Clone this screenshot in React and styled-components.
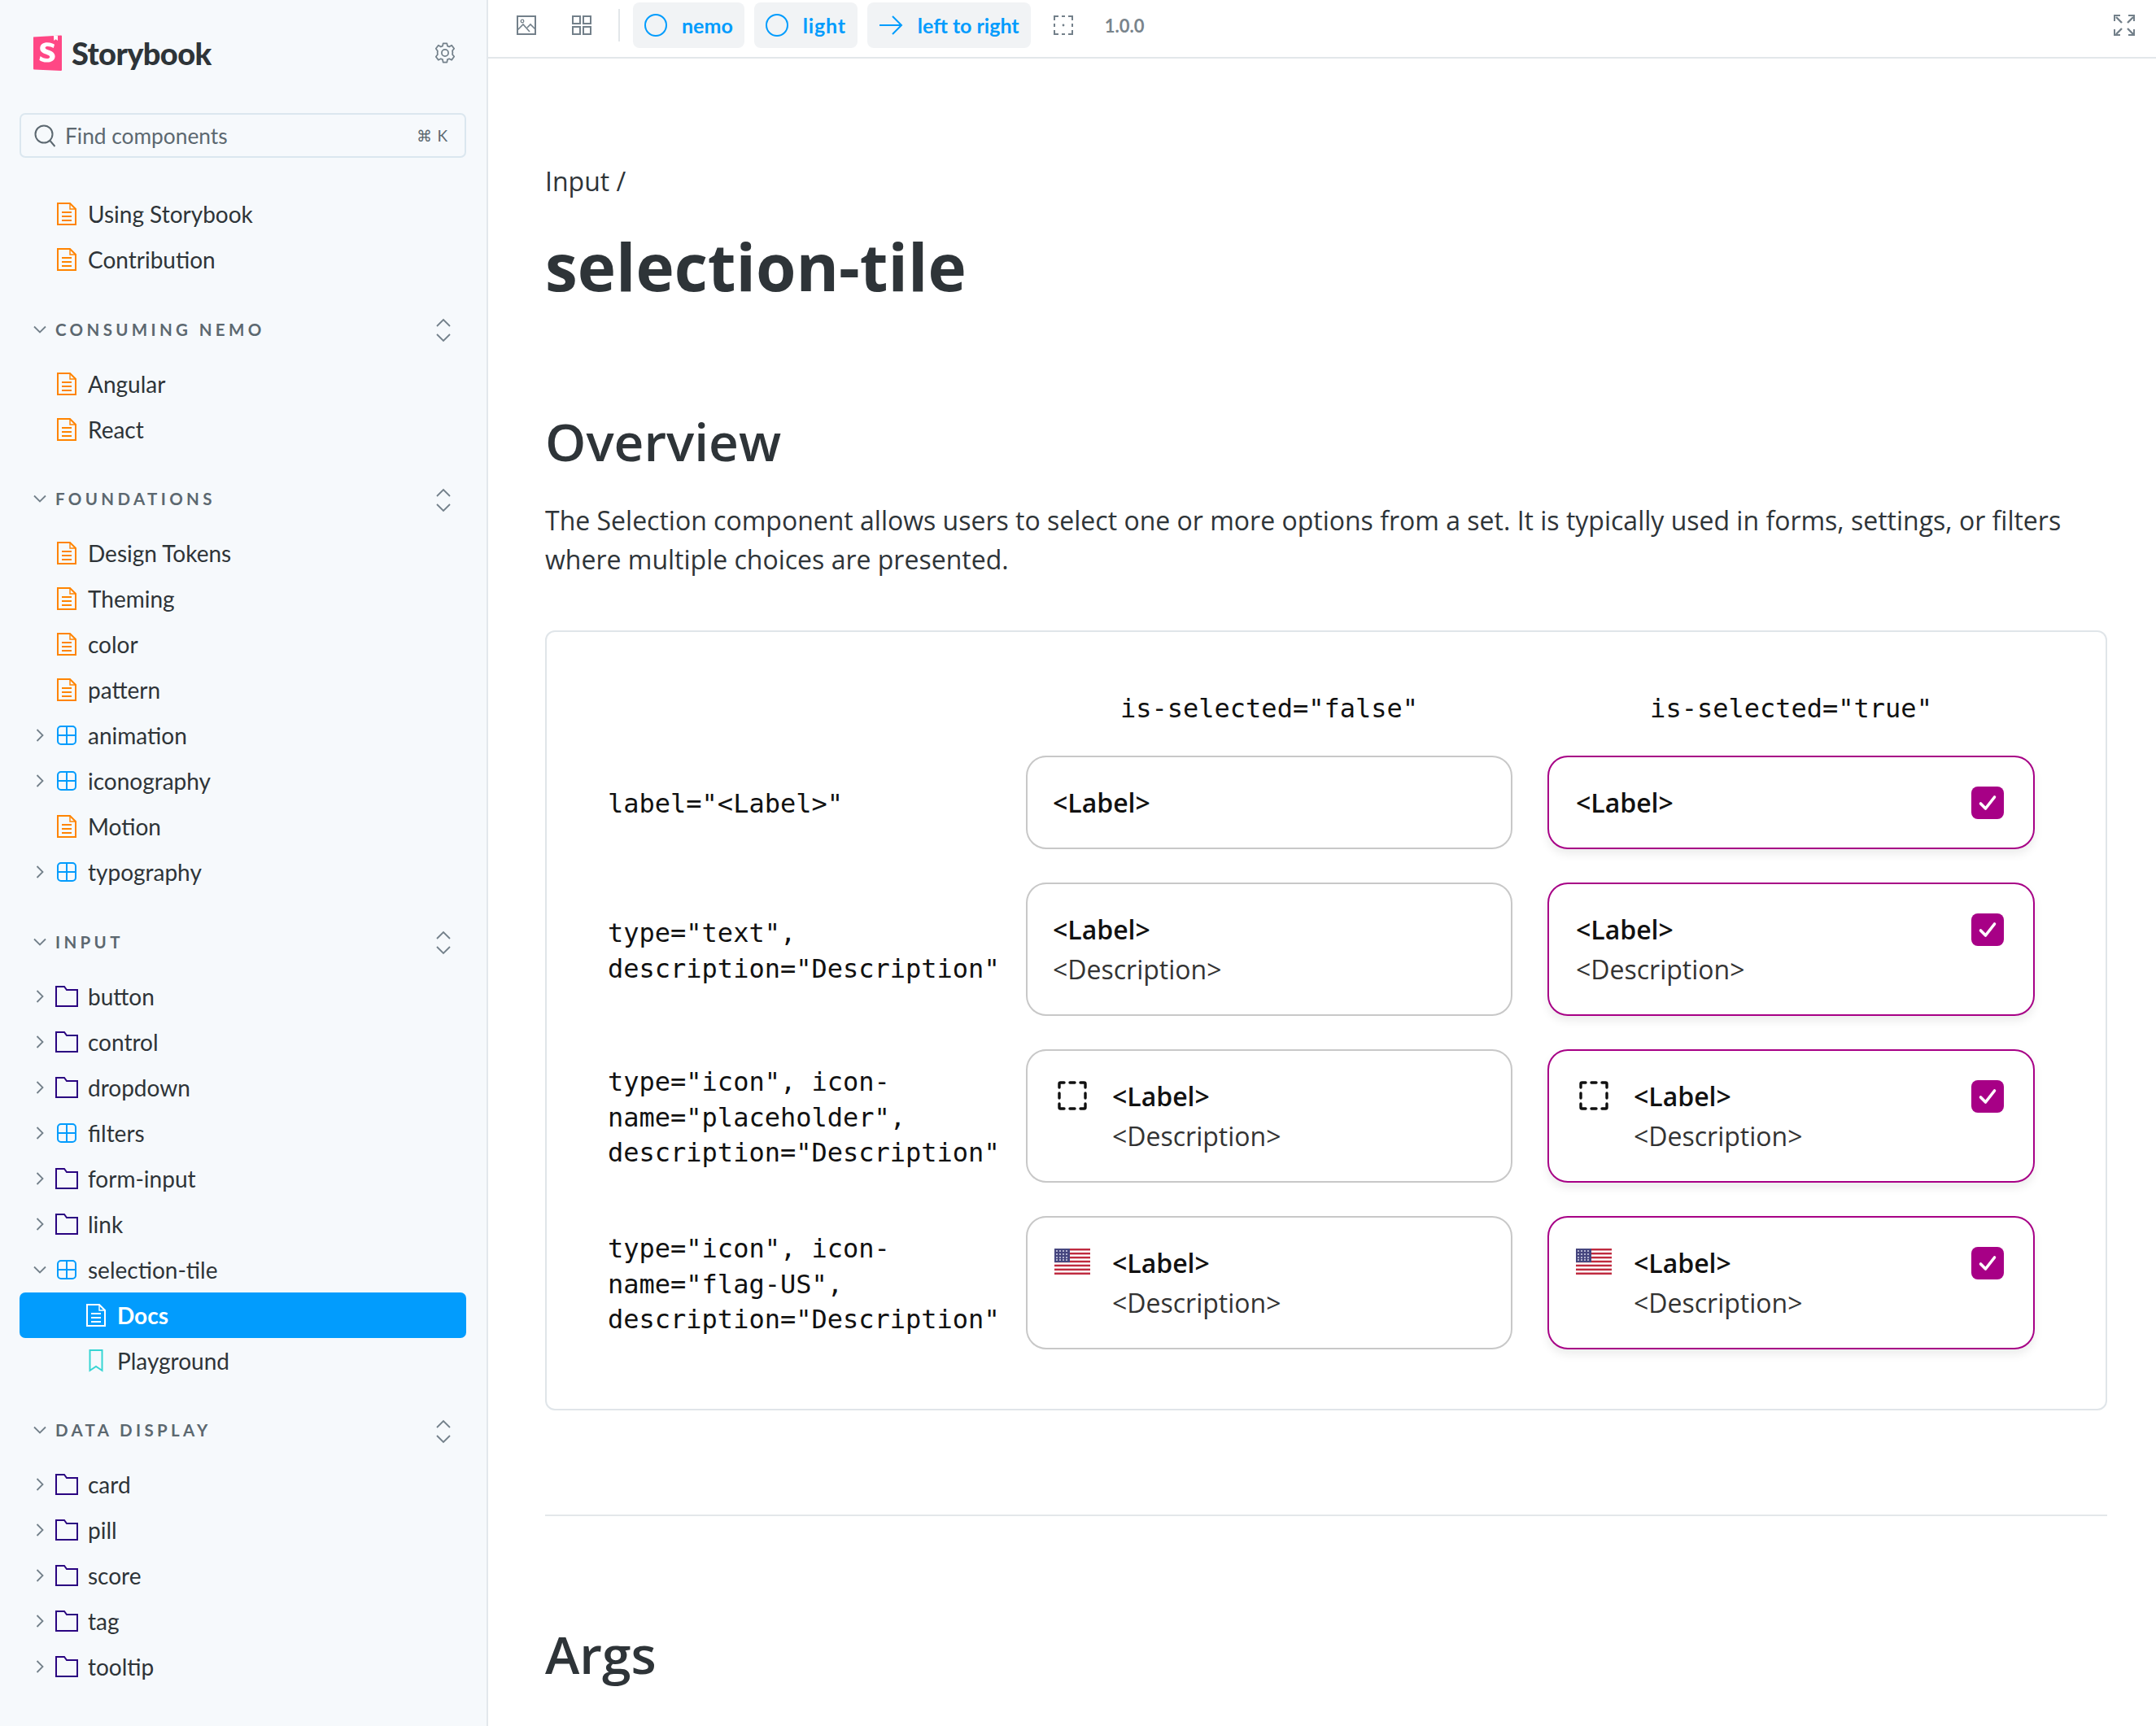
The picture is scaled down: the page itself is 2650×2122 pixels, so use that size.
import React from "react";
import styled, { createGlobalStyle } from "styled-components";

const GlobalStyle = createGlobalStyle`
  html, body { margin: 0; padding: 0; background: #fff; }
  * { box-sizing: border-box; }
`;

const Page = styled.div`
  display: flex;
  width: 2650px;
  height: 2122px;
  overflow: hidden;
  font-family: "Open Sans", "Noto Sans", sans-serif;
  color: #2e3438;
`;

const Sidebar = styled.aside`
  flex: 0 0 600px;
  height: 100%;
  padding: 0 25px 0 24px;
  background: #f6f9fc;
  border-right: 2px solid #e3e8ec;
  font-family: Lato, "Noto Sans", sans-serif;
  overflow: hidden;
`;

const Brand = styled.div`
  display: flex;
  align-items: center;
  height: 130px;
  padding: 0 12px 0 16px;
`;

const BrandName = styled.span`
  margin-left: 12px;
  font-size: 38px;
  font-weight: 900;
  letter-spacing: -0.6px;
  color: #2e3438;
`;

const GearSlot = styled.span`
  display: flex;
  margin-left: auto;
`;

const Search = styled.div`
  display: flex;
  align-items: center;
  height: 55px;
  margin-top: 9px;
  padding: 0 20px 0 16px;
  border: 2px solid #dbe7ef;
  border-radius: 7px;
  color: #5c6870;
  font-size: 26.3px;
`;

const SearchText = styled.span`
  margin-left: 12px;
`;

const Shortcut = styled.span`
  margin-left: auto;
  font-size: 19px;
  letter-spacing: 1px;
`;

const TopGroup = styled.div`
  margin-top: 41px;
`;

const Section = styled.section`
  margin-top: 26.5px;
`;

const SectionHead = styled.div`
  display: flex;
  align-items: center;
  height: 62px;
  padding: 0 18px 0 16px;
  margin-bottom: 8px;
`;

const SectionTitle = styled.span`
  margin-left: 10px;
  font-size: 20.5px;
  font-weight: 700;
  letter-spacing: 4.35px;
  color: #5c6870;
`;

const ExpandSlot = styled.span`
  display: flex;
  margin-left: auto;
  padding-top: 3px;
`;

const Row = styled.div`
  position: relative;
  display: flex;
  align-items: center;
  height: 56px;
  padding-left: ${(p) => (p.$nested ? "82px" : "46px")};
  border-radius: 7px;
  font-size: 28px;
  font-weight: ${(p) => (p.$active ? 700 : 400)};
  color: ${(p) => (p.$active ? "#fff" : "#2e3438")};
  background: ${(p) => (p.$active ? "#029cfd" : "transparent")};
`;

const RowChevron = styled.span`
  position: absolute;
  left: 16px;
  top: 50%;
  display: flex;
  transform: translateY(-50%);
`;

const RowIcon = styled.span`
  display: flex;
  justify-content: center;
  flex: 0 0 28px;
  margin-left: -2px;
  margin-right: 12px;
`;

const Main = styled.main`
  flex: 1;
  min-width: 0;
  height: 100%;
  overflow: hidden;
`;

const Toolbar = styled.div`
  display: flex;
  align-items: center;
  height: 72px;
  padding: 0 26px 8px 35px;
  border-bottom: 2px solid #e3e7ea;
`;

const ToolIcon = styled.span`
  display: flex;
  margin-left: ${(p) => p.$before || 0}px;
  margin-right: ${(p) => p.$gap || 0}px;
`;

const Divider = styled.span`
  width: 2px;
  height: 40px;
  margin: 0 16px 0 33px;
  background: #e3e7ea;
`;

const Pill = styled.span`
  display: flex;
  align-items: center;
  height: 56px;
  margin-right: 12px;
  padding: 0 14px 0 14px;
  border-radius: 8px;
  background: #f1f3f5;
  font-family: Lato, "Noto Sans", sans-serif;
  font-size: 25px;
  font-weight: 700;
  color: #029cfd;
`;

const PillLabel = styled.span`
  margin-left: 18px;
  letter-spacing: ${(p) => p.$track || 0}px;
`;

const Version = styled.span`
  margin-left: 39px;
  font-family: Lato, "Noto Sans", sans-serif;
  font-size: 22px;
  font-weight: 700;
  color: #79848c;
`;

const FullscreenSlot = styled.span`
  display: flex;
  margin-left: auto;
`;

const Content = styled.div`
  width: 1920px;
  margin-left: 70px;
`;

const Crumb = styled.div`
  margin-top: 128px;
  font-size: 32px;
  line-height: 46px;
`;

const Title = styled.h1`
  margin: 29px 0 0;
  font-size: 80px;
  line-height: 104px;
  font-weight: 700;
  color: #2e3438;
`;

const Heading = styled.h2`
  margin: ${(p) => p.$top}px 0 0;
  font-size: 64px;
  line-height: 88px;
  font-weight: 550;
  color: #2e3438;
`;

const Lead = styled.p`
  margin: 29px 0 0;
  font-size: 32px;
  line-height: 48px;
  color: #2e3438;
`;

const Preview = styled.div`
  display: grid;
  grid-template-columns: 471px 598px 599px;
  column-gap: 43px;
  row-gap: 41px;
  align-items: center;
  align-content: start;
  height: 959px;
  margin-top: 63px;
  padding: 75px 75px;
  border: 2px solid #e0e5e9;
  border-radius: 12px;
`;

const Mono = styled.div`
  padding-top: 5px;
  font-family: "DejaVu Sans Mono", "Liberation Mono", monospace;
  font-size: 32px;
  line-height: 43.5px;
  white-space: nowrap;
  color: #111;
`;

const ColHead = styled(Mono)`
  padding-top: 2px;
  line-height: 34px;
  text-align: center;
`;

const Tile = styled.div`
  position: relative;
  display: flex;
  align-items: flex-start;
  gap: 27px;
  padding: 31px 33px 31px ${(p) => (p.$on || p.$hasIcon ? 33 : 31)}px;
  background: #fff;
  border-radius: 25px;
  border: 2px solid ${(p) => (p.$on ? "#a70086" : "#c8c8c8")};
  box-shadow: ${(p) => (p.$on ? "0 6px 12px rgba(0,0,0,0.08)" : "none")};
`;

const TileIcon = styled.span`
  display: flex;
  justify-content: center;
  flex: 0 0 44px;
  margin-top: ${(p) => p.$top}px;
`;

const TileLabel = styled.div`
  font-size: 32px;
  line-height: 49px;
  font-weight: 600;
  color: #111;
`;

const TileDescription = styled.div`
  font-size: 32px;
  line-height: 49px;
  color: #333;
`;

const CheckBox = styled.span`
  position: absolute;
  top: 36px;
  right: 36px;
  display: flex;
  align-items: center;
  justify-content: center;
  width: 40px;
  height: 40px;
  border-radius: 8px;
  background: #a70086;
`;

const Rule = styled.hr`
  height: 2px;
  margin: 128px 0 0;
  border: 0;
  background: #e3e7ea;
`;

const DocIcon = ({ color = "#ff8400" }) => (
  <svg width="24" height="28" viewBox="0 0 24 28" fill="none" stroke={color} strokeWidth="2">
    <path d="M1 1h15l7 7v19H1z" />
    <path d="M16 1v7h7" strokeWidth="1.4" />
    <path d="M6 12h12M6 17h12M6 22h12" />
  </svg>
);

const ComponentIcon = () => (
  <svg width="24" height="24" viewBox="0 0 24 24" fill="none" stroke="#029cfd" strokeWidth="2">
    <rect x="1" y="1" width="22" height="22" rx="4" />
    <path d="M12 1v22M1 12h22" />
  </svg>
);

const FolderIcon = () => (
  <svg width="28" height="26" viewBox="0 0 28 26" fill="none" stroke="#2a0481" strokeWidth="2">
    <path d="M1 1h10l3 4h13v20H1z" />
  </svg>
);

const BookmarkIcon = () => (
  <svg width="18" height="28" viewBox="0 0 18 28" fill="none" stroke="#37d5d3" strokeWidth="2">
    <path d="M1.500 1h15v25L9 21l-7.500 5z" />
  </svg>
);

const Chevron = ({ open, color = "#73808a" }) => (
  <svg width="18" height="18" viewBox="0 0 18 18" fill="none" stroke={color} strokeWidth="1.8">
    <path d={open ? "M2 5.500l7 7 7-7" : "M5.500 2l7 7-7 7"} />
  </svg>
);

const ExpandIcon = () => (
  <svg width="20" height="30" viewBox="0 0 20 30" fill="none" stroke="#73808a" strokeWidth="1.8">
    <path d="M2 10l8-8 8 8M2 20l8 8 8-8" />
  </svg>
);

const Logo = () => (
  <svg width="36" height="44" viewBox="0 0 36 44">
    <path d="M1 2.500L35 .5a1 1 0 0 1 1 1V43a1 1 0 0 1-1 1L2 42.500a1 1 0 0 1-1-1z" fill="#ff4785" />
    <path d="M26 1l.3 6 2.300-1.700L31 7V1z" fill="#fff" />
    <path
      transform="translate(-3.6 -4.5) scale(1.2 1.05)"
      d="M18 13c4 0 6.500 1.500 7.500 2.500l-1 4c-1.800-1.200-3.800-2-5.800-2-1.600 0-2.700.6-2.700 1.800 0 3.200 10 2.500 10 10 0 4.700-3.800 7-8.200 7-3.600 0-6.300-1.300-7.800-2.800l1-4.500c1.800 1.700 4.300 2.900 6.600 2.900 1.900 0 3.100-.8 3.100-2.200 0-3.300-10-2.600-10-9.800C10.700 15.300 14 13 18 13z"
      fill="#fff"
    />
  </svg>
);

const GearIcon = () => (
  <svg width="28" height="28" viewBox="0 0 24 24" fill="none" stroke="#73808a" strokeWidth="1.5">
    <path
      d="M10 2h4l.6 2.800 1.800.8L19 4l2.600 3.500-1.800 2.200.2 2-.2 2 1.800 2.200L19 19.500l-2.600-1.300-1.800.8L14 22h-4l-.6-3-1.800-.8L5 19.500 2.400 16l1.800-2.300-.2-1.700.2-2L2.400 7.500 5 4l2.600 1.600 1.800-.8z"
      strokeLinejoin="round"
    />
    <circle cx="12" cy="12" r="3.500" />
  </svg>
);

const SearchIcon = () => (
  <svg width="26" height="28" viewBox="0 0 26 28" fill="none" stroke="#5c6870" strokeWidth="2">
    <circle cx="12" cy="12" r="10.500" />
    <path d="M19.500 20l6 7" />
  </svg>
);

const ImageIcon = () => (
  <svg width="24" height="24" viewBox="0 0 24 24" fill="none" stroke="#73808a" strokeWidth="2">
    <rect x="1" y="1" width="22" height="22" />
    <circle cx="7" cy="7" r="1.800" strokeWidth="1.300" />
    <path d="M1 18l7-7 8 9M13 15l4-4 6 6" strokeWidth="1.600" />
  </svg>
);

const GridIcon = () => (
  <svg width="24" height="24" viewBox="0 0 24 24" fill="none" stroke="#73808a" strokeWidth="2">
    <rect x="1" y="1" width="9" height="9" />
    <rect x="14" y="1" width="9" height="9" />
    <rect x="1" y="14" width="9" height="9" />
    <rect x="14" y="14" width="9" height="9" />
  </svg>
);

const RingIcon = () => (
  <svg width="28" height="28" viewBox="0 0 28 28" fill="none" stroke="#029cfd" strokeWidth="2">
    <circle cx="14" cy="14" r="13" />
  </svg>
);

const ArrowIcon = () => (
  <svg width="30" height="26" viewBox="0 0 30 26" fill="none" stroke="#029cfd" strokeWidth="2">
    <path d="M1 13h27M17 2l11 11-11 11" />
  </svg>
);

const MeasureIcon = () => (
  <svg width="24" height="24" viewBox="0 0 24 24" fill="none" stroke="#73808a" strokeWidth="2">
    <path d="M1 6V1h5M10 1h4M18 1h5v5M23 10v4M23 18v5h-5M14 23h-4M6 23H1v-5M1 14v-4" />
    <circle cx="12" cy="12" r="1.400" fill="#73808a" stroke="none" />
  </svg>
);

const FullscreenIcon = () => (
  <svg width="26" height="26" viewBox="0 0 26 26" fill="none" stroke="#73808a" strokeWidth="2.400">
    <path d="M3 3l7 7M17 10l7-7M3 24l7-7M17 17l7 7" />
    <path d="M1 8V1h7M18 1h7v7M1 18v7h7M18 25h7v-7" strokeWidth="2" />
  </svg>
);

const DashedIcon = () => (
  <svg width="36" height="36" viewBox="0 0 36 36" fill="none" stroke="#111" strokeWidth="3.400" strokeLinecap="round">
    <path d="M2 8V3.500A1.500 1.500 0 0 1 3.500 2H8M15 2h6M28 2h4.500A1.500 1.500 0 0 1 34 3.500V8" />
    <path d="M34 15v6M34 28v4.500a1.500 1.500 0 0 1-1.500 1.500H28M21 34h-6M8 34H3.500A1.500 1.500 0 0 1 2 32.500V28M2 21v-6" />
  </svg>
);

const FlagIcon = () => (
  <svg width="44" height="32" viewBox="0 0 44 32">
    <rect width="44" height="32" fill="#fff" />
    {[0, 1, 2, 3, 4, 5, 6].map((i) => (
      <rect key={i} y={i * 4.92} width="44" height="2.460" fill="#bf2a3f" />
    ))}
    <rect width="19" height="17" fill="#46467f" />
    {[3, 7, 11, 15].map((x) =>
      [3, 7, 11, 14].map((y) => <circle key={`${x}-${y}`} cx={x} cy={y} r="1" fill="#d8d8ea" />)
    )}
  </svg>
);

const CheckIcon = () => (
  <svg width="24" height="24" viewBox="0 0 24 24" fill="none" stroke="#fff" strokeWidth="3.600" strokeLinecap="round" strokeLinejoin="round">
    <path d="M3.500 13l6 6L20.500 5" />
  </svg>
);

const icons = {
  doc: <DocIcon />,
  comp: <ComponentIcon />,
  folder: <FolderIcon />,
  book: <BookmarkIcon />,
  docWhite: <DocIcon color="#fff" />,
};

const NavRow = ({ icon, label, chevron, nested, active }) => (
  <Row $nested={nested} $active={active}>
    {chevron && (
      <RowChevron>
        <Chevron open={chevron === "open"} />
      </RowChevron>
    )}
    <RowIcon>{icons[icon]}</RowIcon>
    {label}
  </Row>
);

const sections = [
  {
    title: "CONSUMING NEMO",
    rows: [
      { icon: "doc", label: "Angular" },
      { icon: "doc", label: "React" },
    ],
  },
  {
    title: "FOUNDATIONS",
    rows: [
      { icon: "doc", label: "Design Tokens" },
      { icon: "doc", label: "Theming" },
      { icon: "doc", label: "color" },
      { icon: "doc", label: "pattern" },
      { icon: "comp", label: "animation", chevron: "closed" },
      { icon: "comp", label: "iconography", chevron: "closed" },
      { icon: "doc", label: "Motion" },
      { icon: "comp", label: "typography", chevron: "closed" },
    ],
  },
  {
    title: "INPUT",
    rows: [
      { icon: "folder", label: "button", chevron: "closed" },
      { icon: "folder", label: "control", chevron: "closed" },
      { icon: "folder", label: "dropdown", chevron: "closed" },
      { icon: "comp", label: "filters", chevron: "closed" },
      { icon: "folder", label: "form-input", chevron: "closed" },
      { icon: "folder", label: "link", chevron: "closed" },
      { icon: "comp", label: "selection-tile", chevron: "open" },
      { icon: "docWhite", label: "Docs", nested: true, active: true },
      { icon: "book", label: "Playground", nested: true },
    ],
  },
  {
    title: "DATA DISPLAY",
    rows: [
      { icon: "folder", label: "card", chevron: "closed" },
      { icon: "folder", label: "pill", chevron: "closed" },
      { icon: "folder", label: "score", chevron: "closed" },
      { icon: "folder", label: "tag", chevron: "closed" },
      { icon: "folder", label: "tooltip", chevron: "closed" },
    ],
  },
];

const tableRows = [
  { lines: ['label="<Label>"'] },
  { lines: ['type="text",', 'description="Description"'], description: true },
  {
    lines: ['type="icon", icon-', 'name="placeholder",', 'description="Description"'],
    description: true,
    icon: "dashed",
  },
  {
    lines: ['type="icon", icon-', 'name="flag-US",', 'description="Description"'],
    description: true,
    icon: "flag",
  },
];

const TileCard = ({ on, description, icon }) => (
  <Tile $on={on} $hasIcon={Boolean(icon)}>
    {icon === "dashed" && (
      <TileIcon $top={6}>
        <DashedIcon />
      </TileIcon>
    )}
    {icon === "flag" && (
      <TileIcon $top={7}>
        <FlagIcon />
      </TileIcon>
    )}
    <div>
      <TileLabel>{"<Label>"}</TileLabel>
      {description && <TileDescription>{"<Description>"}</TileDescription>}
    </div>
    {on && (
      <CheckBox>
        <CheckIcon />
      </CheckBox>
    )}
  </Tile>
);

export default function App() {
  return (
    <Page>
      <GlobalStyle />
      <Sidebar>
        <Brand>
          <Logo />
          <BrandName>Storybook</BrandName>
          <GearSlot>
            <GearIcon />
          </GearSlot>
        </Brand>
        <Search>
          <SearchIcon />
          <SearchText>Find components</SearchText>
          <Shortcut>⌘ K</Shortcut>
        </Search>
        <TopGroup>
          <NavRow icon="doc" label="Using Storybook" />
          <NavRow icon="doc" label="Contribution" />
        </TopGroup>
        {sections.map((section) => (
          <Section key={section.title}>
            <SectionHead>
              <Chevron open />
              <SectionTitle>{section.title}</SectionTitle>
              <ExpandSlot>
                <ExpandIcon />
              </ExpandSlot>
            </SectionHead>
            {section.rows.map((row) => (
              <NavRow key={row.label} {...row} />
            ))}
          </Section>
        ))}
      </Sidebar>
      <Main>
        <Toolbar>
          <ToolIcon $gap={44}>
            <ImageIcon />
          </ToolIcon>
          <ToolIcon>
            <GridIcon />
          </ToolIcon>
          <Divider />
          <Pill>
            <RingIcon />
            <PillLabel>nemo</PillLabel>
          </Pill>
          <Pill>
            <RingIcon />
            <PillLabel $track={0.8}>light</PillLabel>
          </Pill>
          <Pill>
            <ArrowIcon />
            <PillLabel>left to right</PillLabel>
          </Pill>
          <ToolIcon $before={16}>
            <MeasureIcon />
          </ToolIcon>
          <Version>1.0.0</Version>
          <FullscreenSlot>
            <FullscreenIcon />
          </FullscreenSlot>
        </Toolbar>
        <Content>
          <Crumb>Input /</Crumb>
          <Title>selection-tile</Title>
          <Heading $top={120}>Overview</Heading>
          <Lead>
            The Selection component allows users to select one or more options from a set. It is typically used in
            forms, settings, or filters where multiple choices are presented.
          </Lead>
          <Preview>
            <span />
            <ColHead>is-selected="false"</ColHead>
            <ColHead>is-selected="true"</ColHead>
            {tableRows.map((row) => (
              <React.Fragment key={row.lines.join()}>
                <Mono>
                  {row.lines.map((line) => (
                    <div key={line}>{line}</div>
                  ))}
                </Mono>
                <TileCard description={row.description} icon={row.icon} />
                <TileCard on description={row.description} icon={row.icon} />
              </React.Fragment>
            ))}
          </Preview>
          <Rule />
          <Heading $top={126}>Args</Heading>
        </Content>
      </Main>
    </Page>
  );
}
